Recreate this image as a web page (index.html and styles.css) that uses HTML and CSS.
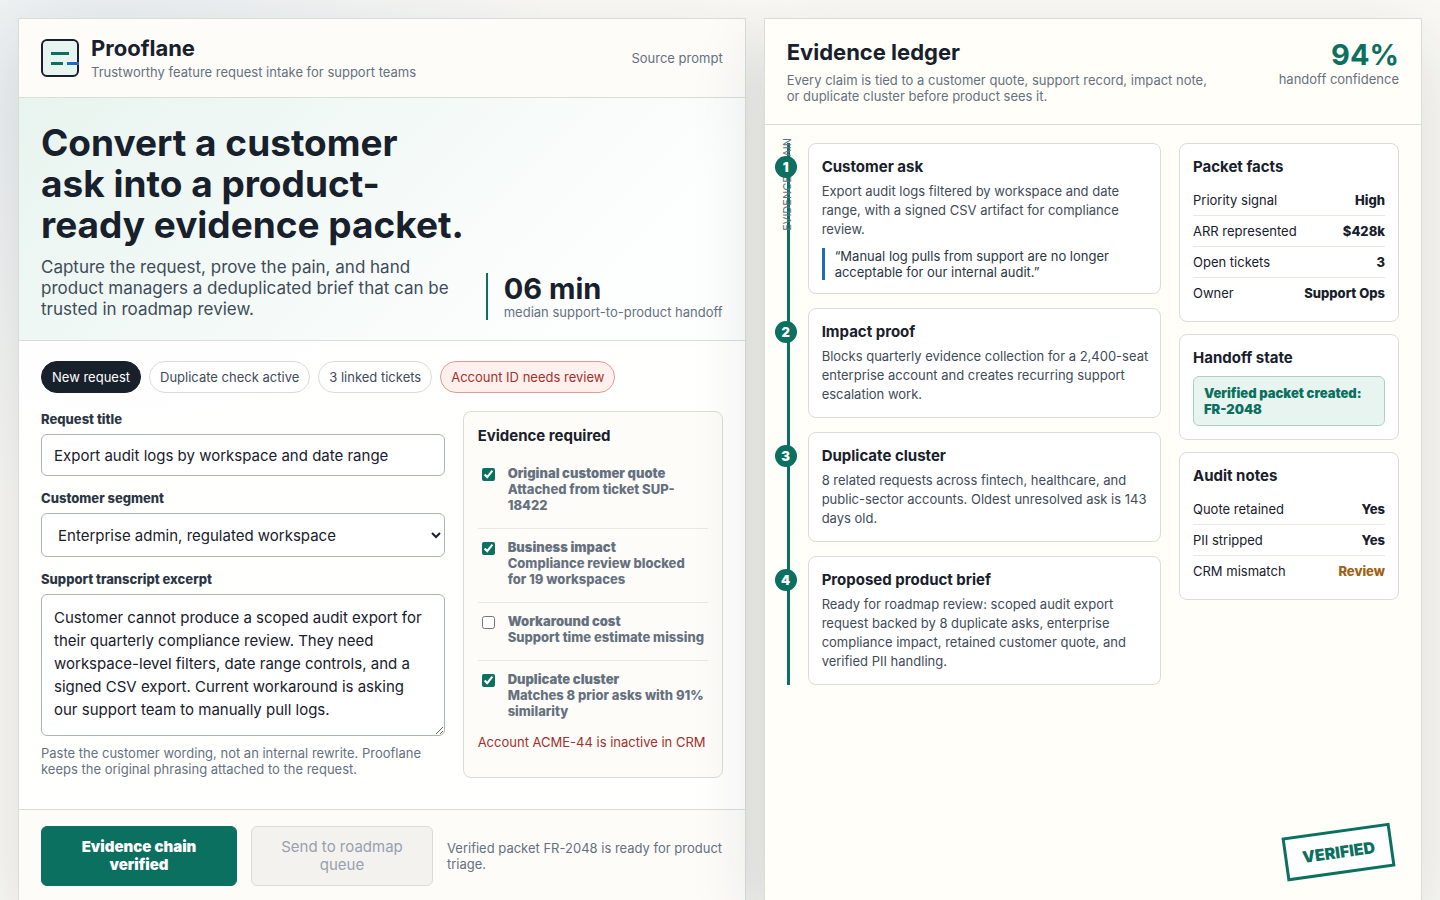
FILE: index.html
```html
<!DOCTYPE html>
<html lang="en">
<head>
    <meta charset="UTF-8">
    <meta name="viewport" content="width=device-width, initial-scale=1.0">
    <title>Prooflane</title>
    <link rel="stylesheet" href="styles.css">
</head>
<body>

    <main class="shell">
        <section class="panel intake">
            <header class="topbar">
                <div class="brand">
                    <svg class="mark" viewBox="0 0 38 38" aria-hidden="true">
                        <rect x="1" y="1" width="36" height="36" rx="5" fill="#e8f4ef" stroke="#18202c" stroke-width="2"/>
                        <path d="M10 14.5h18M10 24.5h12" stroke="#0c7060" stroke-width="3"/>
                        <path d="M26 24.5h12" stroke="#1f6abf" stroke-width="3"/>
                    </svg>
                    <div>
                        <h2>Prooflane</h2>
                        <p class="muted">Trustworthy feature request intake for support teams</p>
                    </div>
                </div>
                <a class="source" href="#">Source prompt</a>
            </header>

            <div class="hero">
                <div>
                    <h1>Convert a customer ask into a product-ready evidence packet.</h1>
                    <p class="lead">Capture the request, prove the pain, and hand product managers a deduplicated brief that can be trusted in roadmap review.</p>
                </div>
                <div class="metric">
                    <strong>06 min</strong>
                    <span>median support-to-product handoff</span>
                </div>
            </div>

            <form class="workspace" id="intakeForm">
                <div class="chips">
                    <span class="chip dark">New request</span>
                    <span class="chip">Duplicate check active</span>
                    <span class="chip">3 linked tickets</span>
                    <span class="chip error">Account ID needs review</span>
                </div>

                <div class="form-grid">
                    <div class="fields">
                        <div class="field">
                            <label for="title">Request title</label>
                            <input type="text" id="title" name="title" value="Export audit logs by workspace and date range">
                        </div>
                        <div class="field">
                            <label for="segment">Customer segment</label>
                            <select id="segment" name="segment">
                                <option>Enterprise admin, regulated workspace</option>
                                <option>Growth team</option>
                            </select>
                        </div>
                        <div class="field">
                            <label for="transcript">Support transcript excerpt</label>
                            <textarea id="transcript" name="transcript">Customer cannot produce a scoped audit export for their quarterly compliance review. They need workspace-level filters, date range controls, and a signed CSV export. Current workaround is asking our support team to manually pull logs.</textarea>
                            <p class="hint">Paste the customer wording, not an internal rewrite. Prooflane keeps the original phrasing attached to the request.</p>
                        </div>
                    </div>

                    <div class="checklist">
                        <h3>Evidence required</h3>
                        <label class="check">
                            <input type="checkbox" checked>
                            <span><strong>Original customer quote</strong> Attached from ticket SUP-18422</span>
                        </label>
                        <label class="check">
                            <input type="checkbox" checked>
                            <span><strong>Business impact</strong> Compliance review blocked for 19 workspaces</span>
                        </label>
                        <label class="check">
                            <input type="checkbox">
                            <span><strong>Workaround cost</strong> Support time estimate missing</span>
                        </label>
                        <label class="check">
                            <input type="checkbox" checked>
                            <span><strong>Duplicate cluster</strong> Matches 8 prior asks with 91% similarity</span>
                        </label>
                        <p class="warning">Account ACME-44 is inactive in CRM</p>
                    </div>
                </div>
            </form>

            <footer class="actions">
                <button class="primary" type="submit" form="intakeForm">Evidence chain verified</button>
                <button class="secondary" type="button" disabled>Send to roadmap queue</button>
                <p class="muted">Verified packet FR-2048 is ready for product triage.</p>
            </footer>
        </section>

        <section class="panel ledger">
            <header class="ledger-head">
                <div class="ledger-title">
                    <h2>Evidence ledger</h2>
                    <p class="muted">Every claim is tied to a customer quote, support record, impact note, or duplicate cluster before product sees it.</p>
                </div>
                <div class="score">
                    <strong>94%</strong>
                    <span>handoff confidence</span>
                </div>
            </header>

            <div class="ledger-body">
                <div class="chain">
                    <span class="chain-label">Evidence chain</span>
                    <article class="card step">
                        <span class="num">1</span>
                        <h3>Customer ask</h3>
                        <p>Export audit logs filtered by workspace and date range, with a signed CSV artifact for compliance review.</p>
                        <blockquote>“Manual log pulls from support are no longer acceptable for our internal audit.”</blockquote>
                    </article>
                    <article class="card step">
                        <span class="num">2</span>
                        <h3>Impact proof</h3>
                        <p>Blocks quarterly evidence collection for a 2,400-seat enterprise account and creates recurring support escalation work.</p>
                    </article>
                    <article class="card step">
                        <span class="num">3</span>
                        <h3>Duplicate cluster</h3>
                        <p>8 related requests across fintech, healthcare, and public-sector accounts. Oldest unresolved ask is 143 days old.</p>
                    </article>
                    <article class="card step">
                        <span class="num">4</span>
                        <h3>Proposed product brief</h3>
                        <p>Ready for roadmap review: scoped audit export request backed by 8 duplicate asks, enterprise compliance impact, retained customer quote, and verified PII handling.</p>
                    </article>
                </div>

                <aside class="side">
                    <div class="card">
                        <h3>Packet facts</h3>
                        <table>
                            <tr><th scope="row">Priority signal</th><td>High</td></tr>
                            <tr><th scope="row">ARR represented</th><td>$428k</td></tr>
                            <tr><th scope="row">Open tickets</th><td>3</td></tr>
                            <tr><th scope="row">Owner</th><td>Support Ops</td></tr>
                        </table>
                    </div>
                    <div class="card">
                        <h3>Handoff state</h3>
                        <div class="state">Verified packet created: FR-2048</div>
                    </div>
                    <div class="card">
                        <h3>Audit notes</h3>
                        <table>
                            <tr><th scope="row">Quote retained</th><td>Yes</td></tr>
                            <tr><th scope="row">PII stripped</th><td>Yes</td></tr>
                            <tr><th scope="row">CRM mismatch</th><td class="review">Review</td></tr>
                        </table>
                    </div>
                </aside>
            </div>

            <div class="stamp">VERIFIED</div>
        </section>
    </main>

</body>
</html>
```
FILE: styles.css
```css
* {
    box-sizing: border-box;
}

:root {
    --ink: #18202c;
    --text: #3f4b59;
    --muted: #667180;
    --line: #d8ddd8;
    --soft-line: #e8e8e1;
    --green: #0c7060;
    --mint: #e8f4ef;
    --blue: #1f6abf;
    --red: #a3302a;
    --paper: #fffef9;
}

body {
    margin: 0;
    min-height: 100vh;
    background: radial-gradient(circle at 8% 8%, rgba(31, 106, 191, 0.08), transparent 28%), #faf9f5;
    color: var(--ink);
    font-family: Inter, "Liberation Sans", sans-serif;
    font-size: 13px;
    line-height: 16px;
}

h1, h2, h3, p, blockquote {
    margin: 0;
}

h2 {
    font-size: 22px;
    line-height: 27px;
}

h3 {
    font-size: 15px;
    line-height: 19px;
}

.shell {
    display: grid;
    grid-template-columns: 1.05fr 0.95fr;
    gap: 18px;
    padding: 18px;
}

.panel {
    border: 1px solid var(--line);
    background-color: rgba(255, 255, 255, 0.9);
    box-shadow: 0 24px 70px rgba(24, 32, 44, 0.14);
}

.muted {
    color: var(--muted);
}

/* Intake side */
.intake {
    display: flex;
    flex-direction: column;
}

.topbar {
    display: flex;
    align-items: center;
    justify-content: space-between;
    padding: 16px 22px 17px;
    border-bottom: 1px solid var(--line);
    background-color: #fdfcf9;
}

.brand {
    display: flex;
    align-items: center;
    gap: 12px;
}

.brand p {
    margin-top: 2px;
}

.mark {
    width: 38px;
    height: 38px;
}

.source {
    color: var(--muted);
    text-decoration: none;
}

.hero {
    display: grid;
    grid-template-columns: 1fr auto;
    align-items: end;
    gap: 18px;
    padding: 24px 22px 20px;
    border-bottom: 1px solid var(--line);
    background: linear-gradient(135deg, #e8f4ef, #fdfefe 80%);
}

h1 {
    font-size: 37px;
    line-height: 41px;
}

.lead {
    margin-top: 12px;
    color: var(--text);
    font-size: 17px;
    line-height: 21px;
}

.metric {
    padding-left: 16px;
    border-left: 2px solid var(--green);
}

.metric strong, .score strong {
    display: block;
    font-size: 29px;
    line-height: 31px;
}

.metric span, .score span {
    color: var(--muted);
}

.workspace {
    flex: 1;
    padding: 20px 22px 31px;
}

.chips {
    display: flex;
    flex-wrap: wrap;
    gap: 8px;
    margin-bottom: 18px;
}

.chip {
    padding: 7px 10px;
    border: 1px solid var(--line);
    border-radius: 999px;
    background-color: white;
    color: var(--text);
}

.chip.dark {
    border-color: var(--ink);
    background-color: var(--ink);
    color: white;
}

.chip.error {
    border-color: #dc9c96;
    background-color: #fff0ee;
    color: var(--red);
}

.form-grid {
    display: grid;
    grid-template-columns: 1fr 260px;
    gap: 18px;
}

.fields {
    display: grid;
    align-content: start;
    gap: 14px;
}

.field label {
    display: block;
    margin-bottom: 7px;
    color: #2b3644;
    font-weight: 800;
}

.field input, .field select, .field textarea {
    display: block;
    width: 100%;
    padding: 11px 12px;
    border: 1px solid #aab6af;
    border-radius: 6px;
    background-color: white;
    color: var(--ink);
    font: 15px Inter, "Liberation Sans", sans-serif;
}

.field input {
    height: 42px;
}

.field select {
    height: 44px;
}

.field textarea {
    height: 142px;
    line-height: 23px;
    resize: vertical;
}

.hint {
    margin-top: 9px;
    color: var(--muted);
}

.checklist {
    padding: 14px 14px 27px;
    border: 1px solid var(--line);
    border-radius: 8px;
    background-color: #fdfcf9;
}

.checklist h3 {
    margin-bottom: 10px;
}

.check {
    display: grid;
    grid-template-columns: 18px 1fr;
    gap: 12px;
    padding: 10px 0 15px;
    border-bottom: 1px solid var(--soft-line);
    color: var(--muted);
    font-weight: 800;
}

.check:last-of-type {
    border-bottom: none;
}

.check span {
    padding-right: 3px;
}

.check strong {
    display: block;
    font-weight: 900;
}

.check input {
    width: 13px;
    height: 13px;
    margin: 3px 0 0 4px;
    accent-color: var(--green);
}

.warning {
    color: var(--red);
}

.actions {
    display: flex;
    align-items: center;
    gap: 14px;
    padding: 16px 22px;
    border-top: 1px solid var(--line);
    background-color: #fdfcf9;
}

.actions p {
    flex: 1;
}

button {
    padding: 11px 16px;
    border: 1px solid var(--line);
    border-radius: 6px;
    font: 15px/18px Inter, "Liberation Sans", sans-serif;
}

.primary {
    flex: 0 0 196px;
    border-color: var(--green);
    background-color: var(--green);
    color: white;
    font-weight: 900;
    cursor: pointer;
}

.secondary {
    flex: 0 0 182px;
    padding: 11px 24px;
    background-color: #f3f2ef;
    color: #98a1ab;
}

/* Ledger side */
.ledger {
    position: relative;
    background-color: var(--paper);
}

.ledger-head {
    display: flex;
    justify-content: space-between;
    gap: 24px;
    padding: 20px 22px;
    border-bottom: 1px solid var(--line);
}

.ledger-title {
    max-width: 430px;
}

.ledger-head p {
    margin-top: 6px;
}

.score {
    text-align: right;
}

.score strong {
    color: var(--green);
    line-height: 32px;
}

.ledger-body {
    display: grid;
    grid-template-columns: 1fr 220px;
    align-items: start;
    gap: 18px;
    padding: 18px 22px;
}

.chain {
    position: relative;
    display: grid;
    gap: 14px;
    padding-left: 18px;
    border-left: 3px solid var(--green);
}

/* Runs bottom to top over the line */
.chain-label {
    position: absolute;
    top: -5px;
    left: -11px;
    color: var(--muted);
    font-size: 11px;
    text-transform: uppercase;
    writing-mode: vertical-rl;
    transform: rotate(180deg);
}

.card {
    padding: 13px;
    border: 1px solid var(--line);
    border-radius: 8px;
    background-color: white;
}

.step {
    position: relative;
    padding-right: 10px;
}

.step p {
    margin-top: 6px;
    color: var(--text);
    line-height: 19px;
}

.num {
    position: absolute;
    top: 12px;
    left: -34px;
    width: 22px;
    height: 22px;
    border-radius: 50%;
    background-color: var(--green);
    color: white;
    font-size: 13px;
    font-weight: 900;
    line-height: 22px;
    text-align: center;
}

blockquote {
    margin-top: 9px;
    padding-left: 10px;
    border-left: 3px solid var(--blue);
    color: #2b3644;
}

.side {
    display: grid;
    gap: 12px;
}

.side h3 {
    margin-bottom: 9px;
}

table {
    width: 100%;
    border-collapse: collapse;
}

th, td {
    padding: 7px 0;
    border-bottom: 1px solid var(--soft-line);
}

tr:last-child th, tr:last-child td {
    border-bottom: none;
}

th {
    font-weight: 400;
    text-align: left;
}

td {
    font-weight: 800;
    text-align: right;
}

.review {
    color: #a05f12;
}

.state {
    padding: 8px 10px;
    border: 1px solid #a9d2c5;
    border-radius: 6px;
    background-color: var(--mint);
    color: var(--green);
    font-weight: 900;
}

.stamp {
    position: absolute;
    right: 28px;
    bottom: 28px;
    padding: 9px 15px;
    border: 3px solid var(--green);
    background-color: white;
    color: var(--green);
    font-size: 16px;
    font-weight: 900;
    line-height: 20px;
    transform: rotate(-8deg);
}
```
